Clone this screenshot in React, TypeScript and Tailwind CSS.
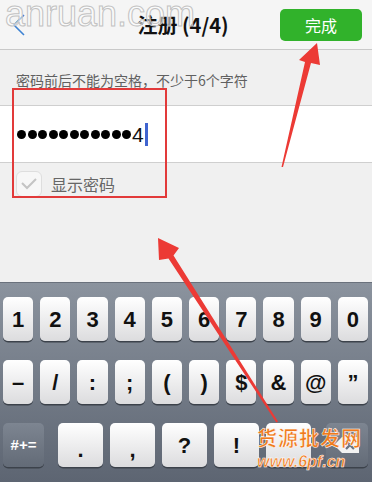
import React from "react";

const Key = ({ label, className = "" }: { label?: React.ReactNode; className?: string }) => (
  <div
    className={
      "h-[44px] rounded-[5px] flex items-center justify-center bg-gradient-to-b from-[#ffffff] to-[#dcdcde] shadow-[0_1.5px_0_#3c424b] text-[#111] font-bold text-[22px] " +
      className
    }
    style={{ fontFamily: "'Liberation Sans', Arial, sans-serif" }}
  >
    {label}
  </div>
);

export default function App() {
  const row1 = ["1", "2", "3", "4", "5", "6", "7", "8", "9", "0"];
  const row2 = ["–", "/", ":", ";", "(", ")", "$", "&", "@", "”"];
  return (
    <div
      className="relative w-[372px] h-[482px] overflow-hidden bg-[#f0f0f0] flex flex-col"
      style={{ fontFamily: "'Noto Sans CJK SC', 'Liberation Sans', sans-serif" }}
    >
      {/* Header */}
      <div className="h-[50px] shrink-0 bg-[#f5f5f5] border-b border-[#c9c9c9] flex items-center relative">
        <div className="w-[40px] pl-[12px] flex items-center">
          <svg width="14" height="24" viewBox="0 0 14 24">
            <path d="M12 2 L2 12 L12 22" fill="none" stroke="#3d82d2" strokeWidth="1.6" />
          </svg>
        </div>
        <div className="flex-1 text-center text-[20px] font-bold text-[#111] pl-[46px]">注册 (4/4)</div>
        <div className="w-[82px] h-[32px] mr-[10px] rounded-[5px] bg-[#31b22b] text-white text-[16px] flex items-center justify-center">
          完成
        </div>
      </div>

      {/* Hint */}
      <div className="h-[55px] shrink-0 pl-[16px] pt-[20px] text-[14px] text-[#606060]">密码前后不能为空格，不少于6个字符</div>

      {/* Input */}
      <div className="h-[58px] shrink-0 bg-white border-y border-[#cfcfcf] flex items-center pl-[17px]">
        <div className="flex items-center gap-[1.5px]">
          {Array.from({ length: 11 }).map((_, i) => (
            <span key={i} className="w-[9px] h-[9px] rounded-full bg-black" />
          ))}
        </div>
        <span className="text-[21px] text-[#111] leading-none ml-[1px]" style={{ fontFamily: "'Liberation Sans', sans-serif" }}>
          4
        </span>
        <span className="w-[3px] h-[23px] bg-[#3f64d0] ml-[1px]" />
      </div>

      {/* Show password */}
      <div className="flex items-center pl-[16px] pt-[8px] gap-[9px]">
        <div className="w-[26px] h-[26px] rounded-[6px] bg-[#f7f7f7] border border-[#dedede] flex items-center justify-center">
          <svg width="18" height="14" viewBox="0 0 18 14">
            <path d="M2 6 L7 11 L16 2" fill="none" stroke="#c4c4c4" strokeWidth="2" />
          </svg>
        </div>
        <span className="text-[16px] text-[#666]">显示密码</span>
      </div>

      <div className="flex-1" />

      {/* Keyboard */}
      <div className="h-[200px] shrink-0 border-t border-[#6a717c] bg-gradient-to-b from-[#8b939e] to-[#5d6572] pt-[14px] pl-[3px] pr-[4px] flex flex-col gap-[19px]">
        <div className="flex gap-[7px]">
          {row1.map((k) => (
            <Key key={k} label={k} className="flex-1" />
          ))}
        </div>
        <div className="flex gap-[7px]">
          {row2.map((k) => (
            <Key key={k} label={k} className="flex-1" />
          ))}
        </div>
        <div className="flex">
          <div
            className="w-[41px] h-[44px] rounded-[5px] bg-gradient-to-b from-[#7d8591] to-[#636b77] shadow-[0_1.5px_0_#3c424b] text-white font-bold text-[15px] flex items-center justify-center"
            style={{ fontFamily: "'Liberation Sans', sans-serif" }}
          >
            #+=
          </div>
          <div className="flex gap-[7px] ml-[14px]">
            <Key label="." className="w-[45px] pt-[8px]" />
            <Key label="," className="w-[45px] pt-[8px]" />
            <Key label="?" className="w-[45px]" />
            <Key label="!" className="w-[45px]" />
            <Key label="" className="w-[45px]" />
          </div>
          <div className="w-[42px] h-[44px] ml-[15px] rounded-[5px] bg-gradient-to-b from-[#7d8591] to-[#636b77] shadow-[0_1.5px_0_#3c424b] flex items-center justify-center">
            <svg width="28" height="20" viewBox="0 0 28 20">
              <path d="M9 2 H26 V18 H9 L1 10 Z" fill="#f2f2f2" />
              <path d="M13 6 L21 14 M21 6 L13 14" stroke="#6b7380" strokeWidth="2.4" />
            </svg>
          </div>
        </div>
      </div>

      {/* Watermark top */}
      <div
        className="absolute left-[5px] top-[-4px] text-[36px] leading-none text-[rgba(255,255,255,0.55)] [-webkit-text-stroke:1px_#c2c2c2] pointer-events-none"
        style={{ fontFamily: "'Liberation Sans', Arial, sans-serif" }}
      >
        anruan.com
      </div>

      {/* Red highlight box */}
      <div className="absolute left-[12px] top-[88px] w-[155px] h-[110px] border-2 border-[#e23a3a] pointer-events-none" />

      {/* Red arrows */}
      <svg className="absolute left-0 top-0 pointer-events-none" width="372" height="482" viewBox="0 0 372 482">
        <polygon points="281.5,167 305,62 299,60 317,43 320,65 311,63 283,167" fill="#ec3a35" />
        <polygon points="158,238 179,248 173.5,255.4 278,421.6 276.3,422.4 168.5,258.6 159,260" fill="#ec3a35" />
      </svg>

      {/* Watermark bottom */}
      <div className="absolute left-[257px] top-[428px] w-[108px] flex flex-col items-start pointer-events-none leading-none">
        <span
          className="text-[20px] font-bold text-[#f07a1c] [-webkit-text-stroke:0.5px_#ffffff] tracking-[1px]"
          style={{ fontFamily: "'Noto Sans CJK SC', sans-serif" }}
        >
          货源批发网
        </span>
        <span
          className="text-[16px] italic font-bold text-[#f07a1c] [-webkit-text-stroke:0.5px_#ffffff] mt-[6px]"
          style={{ fontFamily: "'Liberation Sans', sans-serif" }}
        >
          www.6pf.cn
        </span>
      </div>
    </div>
  );
}
